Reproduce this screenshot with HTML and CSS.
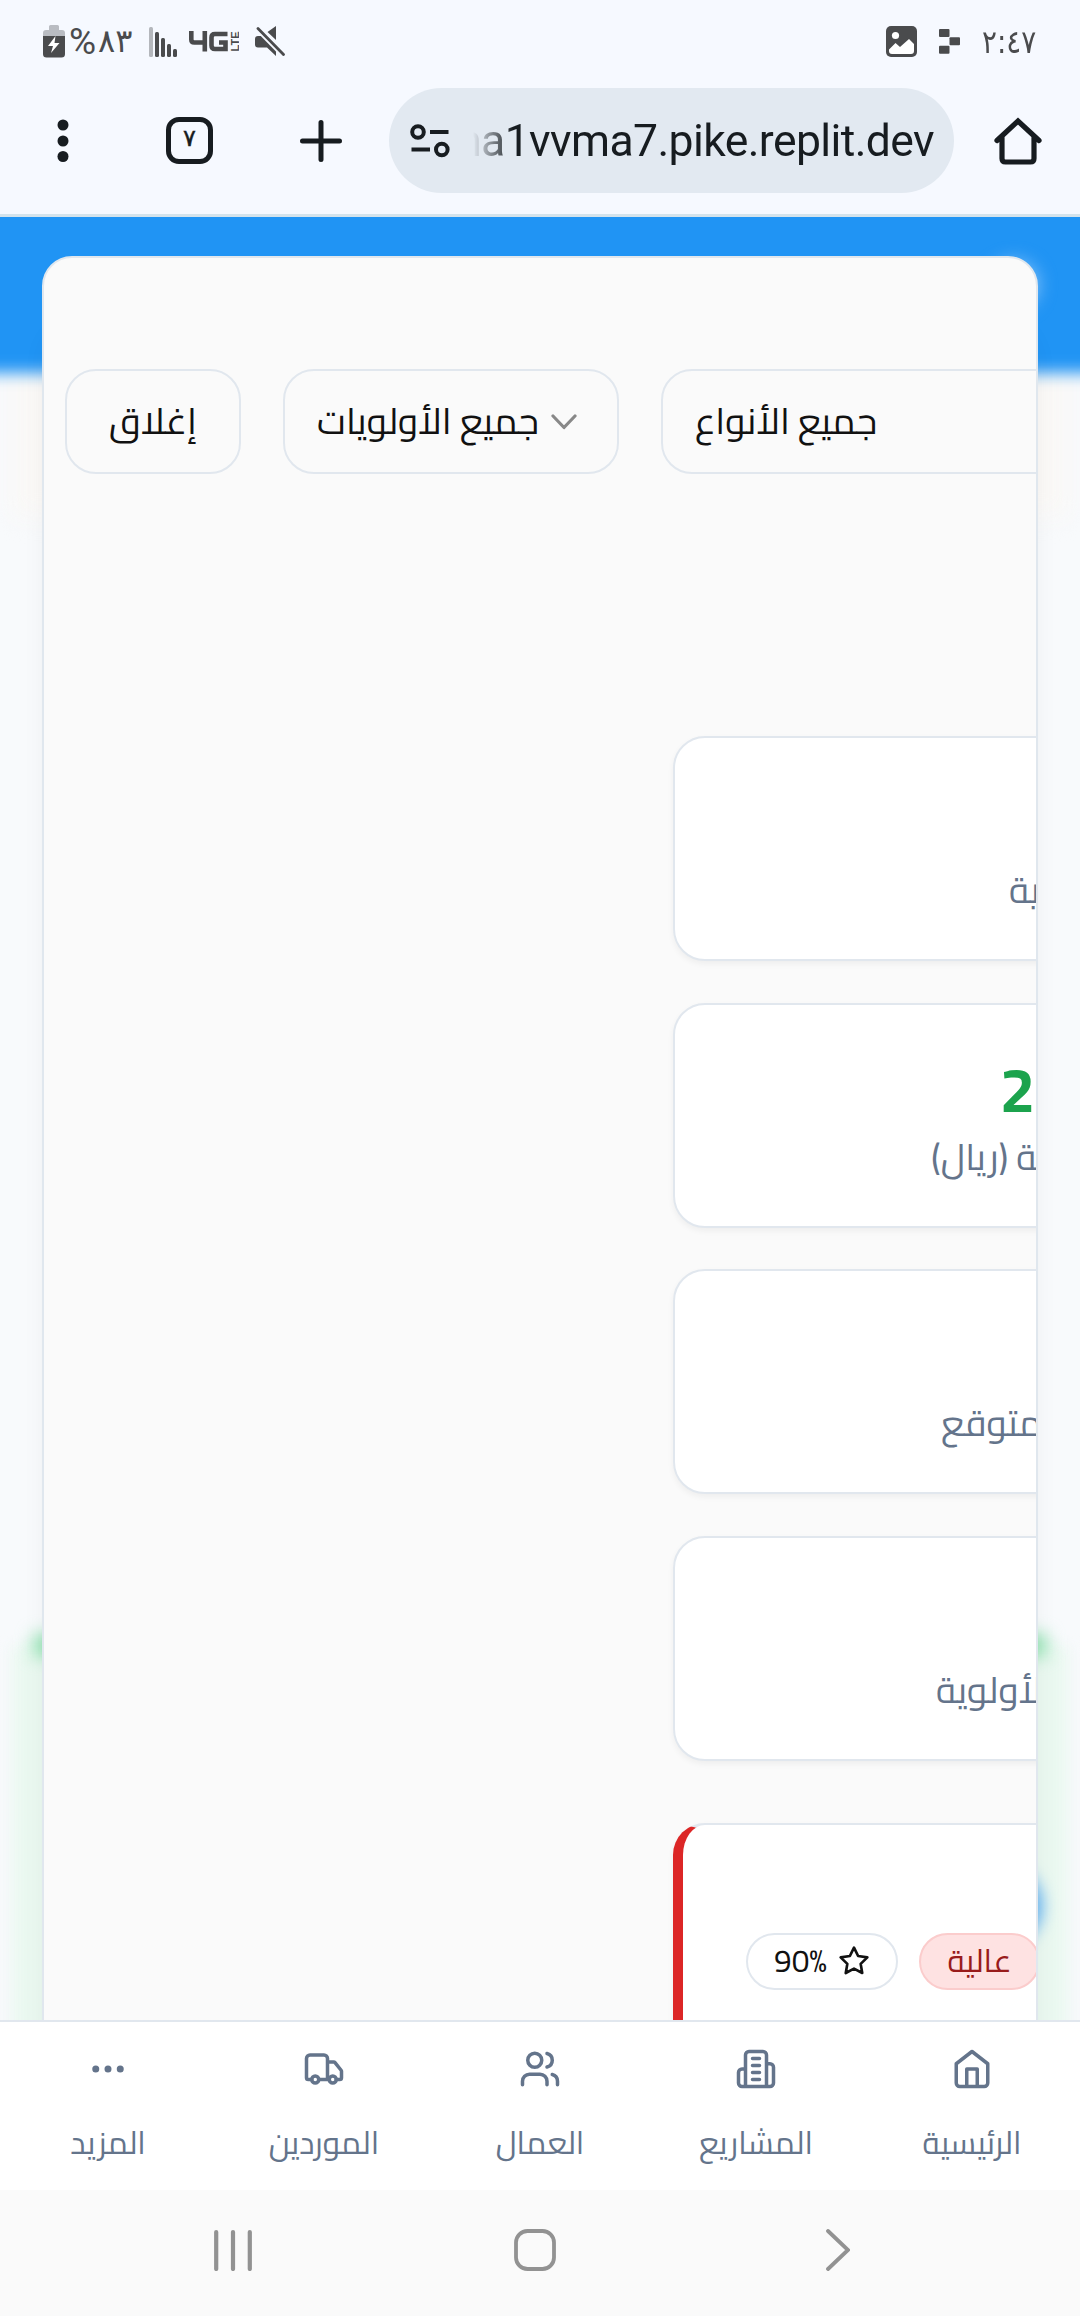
FILE: index.html
```html
<!DOCTYPE html>
<html lang="ar">
<head>
<meta charset="utf-8">
<title>التوصيات</title>
<link rel="stylesheet" href="styles.css">
</head>
<body>
<div class="screen">
  <header class="chrome">
    <div class="status">
      <div class="status-group">
        <svg class="battery" width="22" height="33" viewBox="0 0 22 33"><path d="M6 1.500q0-1.500 1.500-1.500h7q1.500 0 1.500 1.500V5h3q3 0 3 3v3H0V8q0-3 3-3h3z" fill="#b9bcc2"/><path d="M0 11h22v18q0 3.500-3.500 3.500h-15Q0 32.500 0 29z" fill="#4a4b4d"/><path d="M12.500 11 5 21h5l-2 7 8.500-10h-5z" fill="#fff"/></svg>
        <span class="percent"><span class="sign">%</span><span class="digits">٨٣</span></span>
        <svg class="signal" width="29" height="30" viewBox="0 0 29 30" fill="#4a4b4d"><rect width="4" height="30" rx="1.500" fill="#b4b7bc"/><rect x="6" y="5" width="4" height="25" rx="1.500"/><rect x="12" y="11" width="4" height="19" rx="1.500"/><rect x="18" y="17" width="4" height="13" rx="1.500"/><rect x="24" y="22" width="4" height="8" rx="1.500"/></svg>
        <svg class="network" width="50" height="22" viewBox="0 0 50 22"><g fill="none" stroke="#4a4b4d" stroke-width="4.600"><path d="M2.300 0v8.500q0 3 3 3H16M15.800 0v20.500"/><path d="M38.500 3H26q-3.500 0-3.500 3.500v8q0 3.500 3.500 3.500h10.500v-6.500H30"/></g><text class="lte" transform="translate(50 20.500) rotate(-90)" textLength="20" lengthAdjust="spacingAndGlyphs">LTE</text></svg>
        <svg class="mute" width="30" height="31" viewBox="0 0 30 31"><path d="M21 0v14L12.500 6zM0 13q0-3 3-3h4l14 13v7L12 21.500H3q-3 0-3-3z" fill="#4a4b4d"/><path d="M2.500 2.500 28 28.500" stroke="#f6f9ff" stroke-width="6"/><path d="M3 2.500 28.500 28.500" stroke="#4a4b4d" stroke-width="2.800" stroke-linecap="round"/></svg>
      </div>
      <div class="status-group">
        <svg width="31" height="31" viewBox="0 0 31 31"><rect width="31" height="31" rx="5" fill="#4a4b4d"/><circle cx="9.500" cy="9.500" r="3.600" fill="#fff"/><path d="M3 23.500 9.500 17l4.500 4 9-8 5 5v7q0 3-3 3H6q-3 0-3-3z" fill="#fff"/></svg>
        <svg class="replit" width="21" height="25" viewBox="0 0 21 25" fill="#4a4b4d"><rect width="10.500" height="8" rx="1"/><rect x="10.500" y="8.300" width="10.500" height="8" rx="1"/><rect y="16.700" width="10.500" height="8" rx="1"/></svg>
        <span class="clock">٢:٤٧</span>
      </div>
    </div>
    <div class="toolbar">
      <svg class="menu" width="12" height="44" viewBox="0 0 12 44" fill="#171c20"><circle cx="6" cy="6" r="5.500"/><circle cx="6" cy="22" r="5.500"/><circle cx="6" cy="37.500" r="5.500"/></svg>
      <div class="tabs">٧</div>
      <svg class="plus" width="42" height="42" viewBox="0 0 42 42" stroke="#171c20" stroke-width="5" stroke-linecap="round"><path d="M2.500 21h37M21 2.500v37"/></svg>
      <div class="address">
        <svg width="40" height="34" viewBox="0 0 40 34" fill="none" stroke="#171c20" stroke-width="4"><circle cx="8" cy="8" r="5.800"/><path d="M20 8h18.500M1.500 25.500H20"/><circle cx="31.800" cy="25.500" r="5.800"/></svg>
        <div class="url-clip"><span class="url">ma1vvma7.pike.replit.dev</span></div>
      </div>
      <svg class="home" width="48" height="48" viewBox="0 0 48 48" fill="none" stroke="#171c20" stroke-width="5.200" stroke-linecap="round"><path d="M3 23.500 24 4l21 19.500M8 20v21.500Q8 45 11.500 45h25q3.500 0 3.500-3.500V20"/></svg>
    </div>
  </header>

  <main class="viewport">
    <div class="backdrop">
      <div class="bd-band"></div>
      <div class="bd-header"></div>
      <div class="bd-green"></div>
      <div class="bd-green-edge"></div>
      <div class="bd-blue"></div>
      <div class="bd-light"></div>
    </div>
    <section class="dialog">
      <div class="filters">
        <button class="btn close"><span dir="rtl" class="ar">إغلاق</span></button>
        <button class="btn priority"><span dir="rtl" class="ar">جميع الأولويات</span><svg width="26" height="16" viewBox="0 0 26 16" fill="none" stroke="#888" stroke-width="3.200" stroke-linecap="round" stroke-linejoin="round"><path d="M2 2l11 11.500L24 2"/></svg></button>
        <button class="btn types"><span dir="rtl" class="ar">جميع الأنواع</span></button>
      </div>
      <div class="cards">
        <article class="card"><div class="num"></div><span dir="rtl" class="ar label l1">ذكية</span></article>
        <article class="card"><strong class="num">2</strong><span dir="rtl" class="ar label l2">متوقعة (ريال)</span></article>
        <article class="card"><div class="num"></div><span dir="rtl" class="ar label l3">متوقع</span></article>
        <article class="card"><div class="num"></div><span dir="rtl" class="ar label l4">الأولوية</span></article>
        <article class="card alert">
          <div class="pill score"><span class="score-text">90%</span><svg width="32" height="32" viewBox="0 0 24 24" fill="none" stroke="#111" stroke-width="2" stroke-linejoin="round"><path d="m12 2 3.090 6.260L22 9.270l-5 4.870 1.180 6.880L12 17.770l-6.180 3.250L7 14.140 2 9.270l6.910-1.010z"/></svg></div>
          <div class="pill high"><span dir="rtl" class="ar">عالية</span></div>
        </article>
      </div>
    </section>
  </main>

  <nav class="tabbar">
    <a class="tab"><svg class="icon" viewBox="0 0 24 24"><circle cx="12" cy="12" r="1"/><circle cx="19" cy="12" r="1"/><circle cx="5" cy="12" r="1"/></svg><span dir="rtl" class="ar">المزيد</span></a>
    <a class="tab"><svg class="icon" viewBox="0 0 24 24"><path d="M14 18V6a2 2 0 0 0-2-2H4a2 2 0 0 0-2 2v11a1 1 0 0 0 1 1h2M15 18H9M19 18h2a1 1 0 0 0 1-1v-3.650a1 1 0 0 0-.22-.624l-3.480-4.350A1 1 0 0 0 17.520 8H14"/><circle cx="17" cy="18" r="2"/><circle cx="7" cy="18" r="2"/></svg><span dir="rtl" class="ar">الموردين</span></a>
    <a class="tab"><svg class="icon" viewBox="0 0 24 24"><path d="M16 21v-2a4 4 0 0 0-4-4H6a4 4 0 0 0-4 4v2M22 21v-2a4 4 0 0 0-3-3.870M16 3.130a4 4 0 0 1 0 7.750"/><circle cx="9" cy="7" r="4"/></svg><span dir="rtl" class="ar">العمال</span></a>
    <a class="tab"><svg class="icon" viewBox="0 0 24 24"><path d="M6 22V4a2 2 0 0 1 2-2h8a2 2 0 0 1 2 2v18ZM6 12H4a2 2 0 0 0-2 2v6a2 2 0 0 0 2 2h2M18 9h2a2 2 0 0 1 2 2v9a2 2 0 0 1-2 2h-2M10 6h4M10 10h4M10 14h4M10 18h4"/></svg><span dir="rtl" class="ar">المشاريع</span></a>
    <a class="tab"><svg class="icon" viewBox="0 0 24 24"><path d="m3 9 9-7 9 7v11a2 2 0 0 1-2 2H5a2 2 0 0 1-2-2zM9 22V12h6v10"/></svg><span dir="rtl" class="ar">الرئيسية</span></a>
  </nav>

  <footer class="system">
    <svg width="38" height="42" viewBox="0 0 38 42" stroke="#929292" stroke-width="4.200" stroke-linecap="round"><path d="M2.200 3v37M19 3v37M35.800 3v37"/></svg>
    <svg class="sys-home" width="42" height="42" viewBox="0 0 42 42" fill="none" stroke="#929292" stroke-width="3.800"><rect x="2" y="2" width="38" height="38" rx="11.500"/></svg>
    <svg class="sys-back" width="24" height="42" viewBox="0 0 24 42" fill="none" stroke="#929292" stroke-width="3.800" stroke-linecap="round"><path d="M2 2l20 19L2 40"/></svg>
  </footer>
</div>
</body>
</html>
```
FILE: styles.css
```css
* { box-sizing: border-box; }
body { margin: 0; font-family: Cairo, "DejaVu Sans", sans-serif; }
svg { display: block; flex: none; }
.screen { width: 1080px; height: 2316px; display: flex; flex-direction: column; overflow: hidden; background: #fafafa; }

/* browser chrome */
.chrome { height: 217px; flex: none; background: #f6f9ff; border-bottom: 3px solid #d3e3ec; }
.status { height: 83px; display: flex; justify-content: space-between; align-items: center; padding: 0 43px; color: #4a4b4d; }
.status-group { display: flex; align-items: center; white-space: nowrap; }
.percent { width: 62px; margin-left: 6px; display: flex; }
.sign { width: 27px; margin-left: -2px; margin-right: 2px; font: 37px/46px Roboto, sans-serif; }
.digits { font: 32px/44px "DejaVu Sans", sans-serif; }
.signal { margin-left: 16px; }
.network { margin-left: 11px; }
.lte { font: bold 11px "Liberation Sans", sans-serif; fill: #4a4b4d; }
.mute { margin-left: 16px; }
.replit { margin-left: 22px; }
.clock { width: 55px; margin-left: 22px; font: 32px/40px "DejaVu Sans", sans-serif; transform: scaleX(.87); transform-origin: left; }
.toolbar { height: 105px; margin-top: 5px; display: flex; align-items: center; }
.menu { margin-left: 57px; }
.tabs { width: 47px; height: 47px; margin-left: 97px; border: 5px solid #171c20; border-radius: 13px; color: #171c20; font: 24px/32px "DejaVu Sans", sans-serif; -webkit-text-stroke: .5px #171c20; text-align: center; }
.plus { margin-left: 87px; }
.address { width: 565px; height: 105px; margin-left: 47px; padding: 0 20px 0 21px; border-radius: 53px; background: #e2e9f1; display: flex; align-items: center; }
.url-clip { flex: 1; margin-left: 23px; overflow: hidden; display: flex; justify-content: flex-end; -webkit-mask-image: linear-gradient(90deg, transparent, #000 40px); mask-image: linear-gradient(90deg, transparent, #000 40px); }
.url { font: 44.500px/60px Roboto, sans-serif; letter-spacing: -.6px; color: #171c20; white-space: nowrap; }
.home { margin-left: 40px; }

/* dimmed page behind the dialog */
.viewport { position: relative; flex: 1; overflow: hidden; background: #f8fafc; padding: 39px 42px 0; }
.backdrop { position: absolute; inset: 0; overflow: hidden; }
.backdrop div { position: absolute; }
.bd-header { left: -40px; right: -40px; top: -40px; height: 196px; background: #2094f4; filter: blur(8px); }
.bd-band { left: 12px; right: 12px; top: 130px; height: 170px; background: #faf8f6; filter: blur(12px); }
.bd-green { left: 12px; right: 12px; top: 1430px; bottom: -30px; background: #eaf8f0; filter: blur(7px); }
.bd-green-edge { left: 34px; right: 34px; top: 1418px; height: 20px; background: #7fdfa5; filter: blur(9px); }
.bd-blue { left: 960px; width: 82px; height: 82px; top: 1648px; border-radius: 50%; background: #58aef3; filter: blur(8px); }
.bd-light { left: 990px; width: 48px; height: 48px; top: 44px; border-radius: 50%; background: #8cc6fb; filter: blur(9px); }

/* dialog */
.dialog { position: relative; height: 1830px; border: 2px solid #e0e7ee; border-radius: 30px 30px 0 0; background: #fafafa; overflow: hidden; box-shadow: 0 70px 30px -8px rgba(0,0,0,.07); }
.ar { display: inline-block; white-space: nowrap; flex: none; }
.filters { display: flex; gap: 42px; margin: 111px 0 0 21px; }
.btn { height: 105px; flex: none; border: 2px solid #e1e7ee; border-radius: 31px; background: #fafafa; padding: 0; color: #111; font: 36.750px/52px Cairo, "DejaVu Sans", sans-serif; display: flex; align-items: center; }
.btn .ar { margin-bottom: 2px; }
.close { width: 176px; justify-content: center; }
.priority { width: 336px; justify-content: space-between; padding: 0 40px 0 32px; }
.types { width: 440px; padding-left: 32px; }
.cards { display: flex; flex-direction: column; gap: 42px; margin: 262px 0 0 629px; }
.card { width: 500px; height: 225px; flex: none; border: 2px solid #e1e7ee; border-radius: 32px; background: #fff; box-shadow: 0 3px 6px rgba(0,0,0,.05); display: flex; flex-direction: column; align-items: flex-start; padding-top: 42px; }
.card + .card { margin-top: -.4px; }
.num { height: 84px; margin-left: 325px; font: bold 63px/84px Cairo, "Noto Sans", sans-serif; color: #1ca34d; }
.label { font-size: 36.750px; line-height: 52px; color: #64748b; }
.l1 { margin-left: 334px; }
.l2 { margin-left: 256px; }
.l3 { margin-left: 266px; }
.l4 { margin-left: 261px; }
.card.alert { height: 400px; margin-top: 20px; border-left: 10px solid #dc2626; flex-direction: row; padding: 108px 0 0 63px; gap: 21px; }
.pill { height: 57px; flex: none; border: 2px solid #e1e7ee; border-radius: 29px; display: flex; align-items: center; font-size: 31.500px; line-height: 42px; color: #111; }
.score { width: 152px; justify-content: space-between; padding: 0 26px; }
.high { width: 121px; justify-content: center; background: #fee2e2; border-color: #fbcccc; color: #991b1b; }

/* bottom tabs */
.tabbar { height: 170px; flex: none; display: flex; background: #fff; border-top: 2px solid #e1e7ee; }
.tab { flex: 1; display: flex; flex-direction: column; align-items: center; padding-top: 26px; color: #64748b; font-size: 31.500px; line-height: 42px; }
.icon { width: 42px; height: 42px; margin-bottom: 32px; fill: none; stroke: #64748b; stroke-width: 2; stroke-linecap: round; stroke-linejoin: round; }

.system { height: 126px; flex: none; display: flex; align-items: center; padding: 0 0 6px 214px; background: #fafafa; }
.sys-home { margin-left: 262px; }
.sys-back { margin-left: 270px; }
```
